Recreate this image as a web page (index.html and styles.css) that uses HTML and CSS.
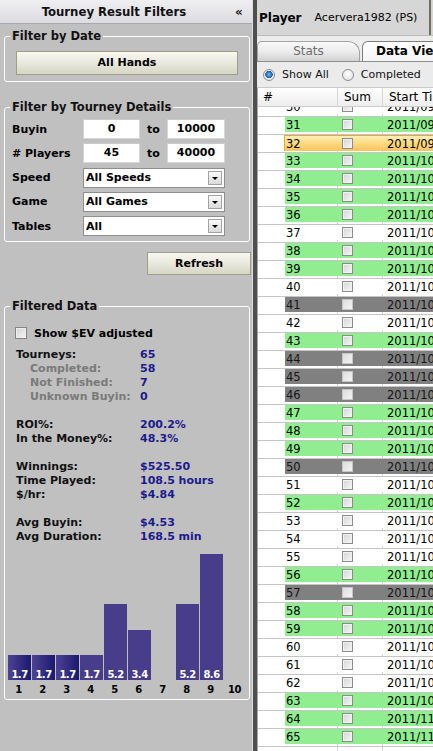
FILE: index.html
```html
<!DOCTYPE html>
<html>
<head>
<meta charset="utf-8">
<title>Tourney Result Filters</title>
<link rel="stylesheet" href="styles.css">
</head>
<body>
<div class="app">
  <aside class="filters">
    <div class="fhead"><span class="ftitle">Tourney Result Filters</span><span class="collapse">«</span></div>

    <fieldset class="grp g1">
      <legend>Filter by Date</legend>
      <div class="btn wide">All Hands</div>
    </fieldset>

    <fieldset class="grp g2">
      <legend>Filter by Tourney Details</legend>
      <div class="frow first"><span class="flabel">Buyin</span><span class="inp i1">0</span><span class="to">to</span><span class="inp i2">10000</span></div>
      <div class="frow"><span class="flabel"># Players</span><span class="inp i1">45</span><span class="to">to</span><span class="inp i2">40000</span></div>
      <div class="frow"><span class="flabel">Speed</span><span class="sel"><span class="seltext">All Speeds</span><span class="selbtn"><i class="tri"></i></span></span></div>
      <div class="frow"><span class="flabel">Game</span><span class="sel"><span class="seltext">All Games</span><span class="selbtn"><i class="tri"></i></span></span></div>
      <div class="frow"><span class="flabel">Tables</span><span class="sel"><span class="seltext">All</span><span class="selbtn"><i class="tri"></i></span></span></div>
    </fieldset>

    <div class="btn refresh">Refresh</div>

    <fieldset class="grp g3">
      <legend>Filtered Data</legend>
      <div class="evrow"><span class="cbx"></span><span>Show $EV adjusted</span></div>
      <div class="stats">
        <div class="st"><span class="k">Tourneys:</span><span class="v">65</span></div>
        <div class="st sub"><span class="k">Completed:</span><span class="v">58</span></div>
        <div class="st sub"><span class="k">Not Finished:</span><span class="v">7</span></div>
        <div class="st sub"><span class="k">Unknown Buyin:</span><span class="v">0</span></div>
        <div class="blank"></div>
        <div class="st"><span class="k">ROI%:</span><span class="v">200.2%</span></div>
        <div class="st"><span class="k">In the Money%:</span><span class="v">48.3%</span></div>
        <div class="blank"></div>
        <div class="st"><span class="k">Winnings:</span><span class="v">$525.50</span></div>
        <div class="st"><span class="k">Time Played:</span><span class="v">108.5 hours</span></div>
        <div class="st"><span class="k">$/hr:</span><span class="v">$4.84</span></div>
        <div class="blank"></div>
        <div class="st"><span class="k">Avg Buyin:</span><span class="v">$4.53</span></div>
        <div class="st"><span class="k">Avg Duration:</span><span class="v">168.5 min</span></div>
      </div>
      <div class="chart">
        <div class="bars">
          <div class="slot"><div class="bar grad" style="height:25px">1.7</div></div>
          <div class="slot"><div class="bar grad" style="height:25px">1.7</div></div>
          <div class="slot"><div class="bar grad" style="height:25px">1.7</div></div>
          <div class="slot"><div class="bar" style="height:25px">1.7</div></div>
          <div class="slot"><div class="bar" style="height:76px">5.2</div></div>
          <div class="slot"><div class="bar" style="height:50px">3.4</div></div>
          <div class="slot"></div>
          <div class="slot"><div class="bar" style="height:76px">5.2</div></div>
          <div class="slot"><div class="bar" style="height:126px">8.6</div></div>
          <div class="slot"></div>
        </div>
        <div class="axis"><span>1</span><span>2</span><span>3</span><span>4</span><span>5</span><span>6</span><span>7</span><span>8</span><span>9</span><span>10</span></div>
      </div>
    </fieldset>
  </aside>

  <div class="splitter"></div>

  <main class="viewer">
    <div class="phead"><span class="plabel">Player</span><span class="pname">Acervera1982 (PS)</span><span class="pedge"></span></div>
    <div class="tabs"><div class="tab">Stats</div><div class="tab active">Data View</div></div>
    <div class="toolbar"><span class="radio on"></span><span class="rl">Show All</span><span class="radio"></span><span class="rl">Completed</span></div>
    <div class="grid">
      <div class="ghead"><div class="hc hn">#</div><div class="hc hs">Sum</div><div class="hc hd">Start Time</div></div>
      <div class="gbody">
        <div class="row first"><div class="gut"></div><div class="band"><span class="cn">30</span><span class="cs"><i class="cb"></i></span><span class="cd">2011/09/30</span></div></div>
        <div class="row"><div class="gut"></div><div class="band g"><span class="cn">31</span><span class="cs"><i class="cb"></i></span><span class="cd">2011/09/30</span></div></div>
        <div class="row"><div class="gut"></div><div class="band y"><span class="cn">32</span><span class="cs"><i class="cb"></i></span><span class="cd">2011/09/30</span></div></div>
        <div class="row"><div class="gut"></div><div class="band g"><span class="cn">33</span><span class="cs"><i class="cb"></i></span><span class="cd">2011/10/01</span></div></div>
        <div class="row"><div class="gut"></div><div class="band g"><span class="cn">34</span><span class="cs"><i class="cb"></i></span><span class="cd">2011/10/01</span></div></div>
        <div class="row"><div class="gut"></div><div class="band g"><span class="cn">35</span><span class="cs"><i class="cb"></i></span><span class="cd">2011/10/02</span></div></div>
        <div class="row"><div class="gut"></div><div class="band g"><span class="cn">36</span><span class="cs"><i class="cb"></i></span><span class="cd">2011/10/02</span></div></div>
        <div class="row"><div class="gut"></div><div class="band"><span class="cn">37</span><span class="cs"><i class="cb"></i></span><span class="cd">2011/10/03</span></div></div>
        <div class="row"><div class="gut"></div><div class="band g"><span class="cn">38</span><span class="cs"><i class="cb"></i></span><span class="cd">2011/10/03</span></div></div>
        <div class="row"><div class="gut"></div><div class="band g"><span class="cn">39</span><span class="cs"><i class="cb"></i></span><span class="cd">2011/10/04</span></div></div>
        <div class="row"><div class="gut"></div><div class="band"><span class="cn">40</span><span class="cs"><i class="cb"></i></span><span class="cd">2011/10/04</span></div></div>
        <div class="row"><div class="gut"></div><div class="band x"><span class="cn">41</span><span class="cs"><i class="cb"></i></span><span class="cd">2011/10/05</span></div></div>
        <div class="row"><div class="gut"></div><div class="band"><span class="cn">42</span><span class="cs"><i class="cb"></i></span><span class="cd">2011/10/05</span></div></div>
        <div class="row"><div class="gut"></div><div class="band g"><span class="cn">43</span><span class="cs"><i class="cb"></i></span><span class="cd">2011/10/06</span></div></div>
        <div class="row"><div class="gut"></div><div class="band x"><span class="cn">44</span><span class="cs"><i class="cb"></i></span><span class="cd">2011/10/06</span></div></div>
        <div class="row"><div class="gut"></div><div class="band x"><span class="cn">45</span><span class="cs"><i class="cb"></i></span><span class="cd">2011/10/07</span></div></div>
        <div class="row"><div class="gut"></div><div class="band x"><span class="cn">46</span><span class="cs"><i class="cb"></i></span><span class="cd">2011/10/07</span></div></div>
        <div class="row"><div class="gut"></div><div class="band g"><span class="cn">47</span><span class="cs"><i class="cb"></i></span><span class="cd">2011/10/08</span></div></div>
        <div class="row"><div class="gut"></div><div class="band g"><span class="cn">48</span><span class="cs"><i class="cb"></i></span><span class="cd">2011/10/08</span></div></div>
        <div class="row"><div class="gut"></div><div class="band g"><span class="cn">49</span><span class="cs"><i class="cb"></i></span><span class="cd">2011/10/09</span></div></div>
        <div class="row"><div class="gut"></div><div class="band x"><span class="cn">50</span><span class="cs"><i class="cb"></i></span><span class="cd">2011/10/09</span></div></div>
        <div class="row"><div class="gut"></div><div class="band"><span class="cn">51</span><span class="cs"><i class="cb"></i></span><span class="cd">2011/10/10</span></div></div>
        <div class="row"><div class="gut"></div><div class="band g"><span class="cn">52</span><span class="cs"><i class="cb"></i></span><span class="cd">2011/10/10</span></div></div>
        <div class="row"><div class="gut"></div><div class="band"><span class="cn">53</span><span class="cs"><i class="cb"></i></span><span class="cd">2011/10/11</span></div></div>
        <div class="row"><div class="gut"></div><div class="band"><span class="cn">54</span><span class="cs"><i class="cb"></i></span><span class="cd">2011/10/11</span></div></div>
        <div class="row"><div class="gut"></div><div class="band"><span class="cn">55</span><span class="cs"><i class="cb"></i></span><span class="cd">2011/10/12</span></div></div>
        <div class="row"><div class="gut"></div><div class="band g"><span class="cn">56</span><span class="cs"><i class="cb"></i></span><span class="cd">2011/10/12</span></div></div>
        <div class="row"><div class="gut"></div><div class="band x"><span class="cn">57</span><span class="cs"><i class="cb"></i></span><span class="cd">2011/10/13</span></div></div>
        <div class="row"><div class="gut"></div><div class="band g"><span class="cn">58</span><span class="cs"><i class="cb"></i></span><span class="cd">2011/10/13</span></div></div>
        <div class="row"><div class="gut"></div><div class="band g"><span class="cn">59</span><span class="cs"><i class="cb"></i></span><span class="cd">2011/10/14</span></div></div>
        <div class="row"><div class="gut"></div><div class="band"><span class="cn">60</span><span class="cs"><i class="cb"></i></span><span class="cd">2011/10/14</span></div></div>
        <div class="row"><div class="gut"></div><div class="band"><span class="cn">61</span><span class="cs"><i class="cb"></i></span><span class="cd">2011/10/15</span></div></div>
        <div class="row"><div class="gut"></div><div class="band"><span class="cn">62</span><span class="cs"><i class="cb"></i></span><span class="cd">2011/10/15</span></div></div>
        <div class="row"><div class="gut"></div><div class="band g"><span class="cn">63</span><span class="cs"><i class="cb"></i></span><span class="cd">2011/10/16</span></div></div>
        <div class="row"><div class="gut"></div><div class="band g"><span class="cn">64</span><span class="cs"><i class="cb"></i></span><span class="cd">2011/11/01</span></div></div>
        <div class="row"><div class="gut"></div><div class="band g"><span class="cn">65</span><span class="cs"><i class="cb"></i></span><span class="cd">2011/11/01</span></div></div>
      </div>
    </div>
  </main>
</div>
</body>
</html>
```

FILE: styles.css
```css
* { box-sizing: border-box; }
html, body { margin: 0; padding: 0; }
body {
  width: 433px;
  height: 751px;
  overflow: hidden;
  font-family: "DejaVu Sans", Verdana, sans-serif;
  font-size: 11px;
  color: #000;
  background: #c0c0c0;
}
.app { display: flex; width: 433px; height: 751px; overflow: hidden; }

/* ---------- left filter panel ---------- */
.filters {
  width: 253px;
  flex: none;
  background: #c0c0c0;
  border-right: 1px solid #dedede;
  display: flex;
  flex-direction: column;
}
.fhead {
  height: 24px;
  flex: none;
  display: flex;
  align-items: center;
  background: linear-gradient(#efeff1, #dcdce1);
  border-bottom: 1px solid #a3a8b4;
}
.ftitle {
  flex: 1;
  text-align: center;
  font-family: "DejaVu Sans Condensed", "DejaVu Sans", sans-serif;
  font-stretch: condensed;
  font-weight: bold;
  font-size: 13px;
  color: #111;
}
.collapse {
  width: 24px;
  padding-right: 2px;
  text-align: center;
  font-weight: bold;
  font-size: 12px;
  color: #222;
}

.grp {
  margin: 5px 2px 0 4px;
  padding: 0 0 6px 7px;
  border: 1px solid #fff;
  border-radius: 3px;
  min-width: 0;
}
.grp legend {
  margin-left: -2px;
  padding: 0 2px;
  font-weight: bold;
  font-size: 11.5px;
  line-height: 14px;
  color: #111;
}
.btn {
  height: 24px;
  border: 1px solid #9f9e87;
  background: linear-gradient(#f8f8f2, #e6e6da 55%, #d6d6c4);
  font-weight: bold;
  font-size: 11px;
  line-height: 22px;
  text-align: center;
  color: #000;
}
.wide { margin: 8px 11px 0 4px; }

.g2 { margin-top: 18px; padding-bottom: 5px; }
.frow { display: flex; align-items: center; height: 20px; margin-top: 4.25px; font-weight: bold; }
.frow.first { margin-top: 5px; }
.flabel { width: 71px; flex: none; }
.inp {
  height: 20px;
  background: #fff;
  border: 1px solid #d6d6d6;
  border-top-color: #cbcbcb;
  text-align: center;
  line-height: 18px;
}
.i1 { width: 57px; }
.i2 { width: 58px; }
.to { width: 27px; text-align: center; }
.sel {
  width: 142px;
  height: 20px;
  background: #fff;
  border: 1px solid #8e8e8e;
  display: flex;
  align-items: center;
  justify-content: space-between;
  padding: 0 2px;
}
.selbtn {
  width: 14px;
  height: 14px;
  border: 1px solid #a2a2a2;
  background: linear-gradient(#fbfbfb, #dadada);
  display: flex;
  align-items: center;
  justify-content: center;
}
.tri {
  width: 0;
  height: 0;
  border-top: 3px solid #000;
  border-left: 3px solid transparent;
  border-right: 3px solid transparent;
  margin-top: 1px;
}

.refresh {
  width: 104px;
  height: 23px;
  line-height: 21px;
  margin: 10px 0 0 147px;
}

.g3 { margin-top: 24px; padding-bottom: 2px; }
.evrow { display: flex; align-items: center; height: 12px; margin-top: 14px; font-weight: bold; }
.cbx {
  width: 12px;
  height: 12px;
  margin: 0 7px 0 3px;
  border: 1px solid #858585;
  background: linear-gradient(135deg, #d2d2d2, #f6f6f6);
  box-shadow: inset 0 0 0 1px #eee;
}
.stats { margin-top: 9px; padding-left: 4px; }
.st { display: flex; height: 14px; line-height: 14px; font-weight: bold; white-space: nowrap; }
.k { width: 124px; flex: none; color: #111; }
.sub .k { padding-left: 14px; color: #7a7a7a; }
.v { color: #1b1b8c; }
.blank { height: 14px; }

.chart { margin-left: -4px; }
.bars { display: flex; align-items: flex-end; height: 136px; }
.slot { width: 24px; flex: none; }
.bar {
  width: 23px;
  background: #483d8b;
  color: #fff;
  font-weight: bold;
  font-size: 10px;
  letter-spacing: -0.5px;
  line-height: 10px;
  display: flex;
  align-items: flex-end;
  justify-content: center;
}
.bar.grad { background: linear-gradient(to right, #4e4392, #191970); }
.axis { display: flex; margin: 3px 0 0 -1.5px; height: 14px; line-height: 14px; }
.axis span { width: 24px; flex: none; text-align: center; font-weight: bold; font-size: 10px; letter-spacing: -0.5px; }

.splitter { width: 4px; flex: none; background: #4f4f4f; }

/* ---------- right viewer ---------- */
.viewer {
  width: 176px;
  flex: none;
  display: flex;
  flex-direction: column;
  background: #fff;
  overflow: hidden;
}
.phead {
  height: 36px;
  flex: none;
  display: flex;
  align-items: center;
  padding-left: 2px;
  background: #d6d6d6;
  border-bottom: 1px solid #bcbcbc;
  white-space: nowrap;
}
.plabel { font-weight: bold; font-size: 12px; }
.pname { margin-left: 13px; font-size: 11px; }
.pedge { margin-left: auto; margin-right: 2px; width: 2px; align-self: stretch; background: #6f6f58; }

.tabs {
  height: 26px;
  flex: none;
  display: flex;
  align-items: flex-end;
  background: #ececec;
  border-bottom: 1px solid #8f8f8f;
  white-space: nowrap;
  overflow: hidden;
}
.tab {
  height: 20px;
  width: 103px;
  flex: none;
  border: 1px solid #a3a3a3;
  border-bottom: none;
  border-radius: 5px 12px 0 0;
  background: linear-gradient(#f9f9f9, #ececec 50%, #d2d2d2);
  color: #6e6e6e;
  font-size: 12px;
  line-height: 19px;
  text-align: center;
}
.tab.active {
  width: auto;
  flex: 1;
  margin-left: 2px;
  margin-right: -20px;
  border-color: #7d7d7d;
  border-radius: 6px 0 0 0;
  background: linear-gradient(#ffffff, #f4f4f4);
  color: #000;
  font-weight: bold;
  text-align: left;
  padding-left: 13px;
}

.toolbar {
  height: 26px;
  flex: none;
  display: flex;
  align-items: center;
  padding-left: 6px;
  background: #ebebeb;
  border-bottom: 1px solid #c9c9c9;
  white-space: nowrap;
  font-size: 11px;
}
.radio {
  width: 12px;
  height: 12px;
  flex: none;
  border-radius: 50%;
  border: 1px solid #8d8d8d;
  background: radial-gradient(circle at 50% 40%, #ffffff, #dcdcdc);
}
.radio.on { background: radial-gradient(circle at 50% 45%, #7cc4f4 0, #2a78c4 2.5px, #1a5a9e 3.5px, #f4f4f4 4px, #dcdcdc 6px); }
.rl { margin: 0 13px 0 7px; color: #111; }

.grid {
  flex: 1;
  display: flex;
  flex-direction: column;
  border-left: 1px solid #a9a9a9;
  overflow: hidden;
}
.ghead {
  height: 19px;
  flex: none;
  display: flex;
  background: linear-gradient(#ffffff, #ededed);
  border-bottom: 1px solid #cdcdcd;
  font-size: 12px;
  line-height: 18px;
  white-space: nowrap;
  overflow: hidden;
}
.hc { flex: none; }
.hn { width: 80px; padding-left: 5px; border-right: 1px solid #d6d6d6; }
.hs { width: 45px; padding-left: 6px; border-right: 1px solid #d6d6d6; }
.hd { padding-left: 6px; }

.gbody {
  flex: 1;
  overflow: hidden;
  background:
    linear-gradient(to right, transparent 79px, #d2d2d2 79px, #d2d2d2 80px, transparent 80px, transparent 124px, #d2d2d2 124px, #d2d2d2 125px, transparent 125px),
    #fff;
}
.row {
  display: flex;
  height: 18px;
  padding-bottom: 2px;
  border-bottom: 1px solid #c5c5c5;
  font-size: 11.5px;
  white-space: nowrap;
}
.row.first { margin-top: -8px; }
.gut { width: 27px; flex: none; }
.band {
  flex: 1;
  height: 15px;
  display: flex;
  align-items: center;
  background: #fff;
  color: #000;
  overflow: hidden;
}
.band.g { background: #90ee90; }
.band.x { background: #808080; color: #151515; }
.band.y {
  height: 16px;
  margin-left: -1px;
  margin-bottom: -1px;
  border-top: 1px solid #eaa53e;
  border-left: 1px solid #eaa53e;
  background: linear-gradient(#fff0b4, #fdd980 50%, #f8c45a);
}
.cn { width: 52px; flex: none; padding-left: 1px; }
.cs { width: 45px; flex: none; padding-left: 5px; display: flex; align-items: center; }
.cd { padding-left: 5px; }
.cb {
  width: 11px;
  height: 11px;
  border: 1px solid #8c8c8c;
  background: linear-gradient(135deg, #d4d4d4, #f7f7f7);
  box-shadow: inset 0 0 0 1px #f2f2f2;
}
.band.x .cb { border-color: #c6c6c6; background: linear-gradient(135deg, #dcdcdc, #f4f4f4); box-shadow: none; }
```
